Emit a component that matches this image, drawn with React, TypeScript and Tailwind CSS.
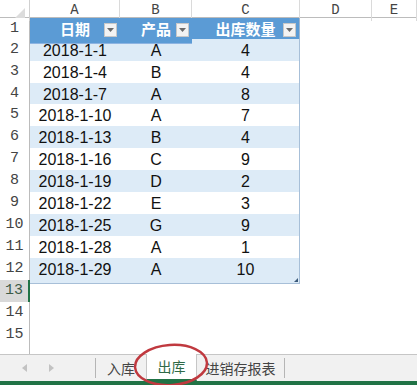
import React from "react";

type Row = { date: string; product: string; qty: string };

const rows: Row[] = [
  { date: "2018-1-1", product: "A", qty: "4" },
  { date: "2018-1-4", product: "B", qty: "4" },
  { date: "2018-1-7", product: "A", qty: "8" },
  { date: "2018-1-10", product: "A", qty: "7" },
  { date: "2018-1-13", product: "B", qty: "4" },
  { date: "2018-1-16", product: "C", qty: "9" },
  { date: "2018-1-19", product: "D", qty: "2" },
  { date: "2018-1-22", product: "E", qty: "3" },
  { date: "2018-1-25", product: "G", qty: "9" },
  { date: "2018-1-28", product: "A", qty: "1" },
  { date: "2018-1-29", product: "A", qty: "10" },
];

const cols = ["A", "B", "C", "D", "E"];

function Dropdown() {
  return (
    <span className="absolute right-[3px] top-1/2 -translate-y-1/2 w-[13px] h-[14px] bg-[#f3f3f3] border border-[#c8c8c8] flex items-center justify-center">
      <svg width="7" height="4" viewBox="0 0 7 4">
        <path d="M0 0h7L3.5 4z" fill="#6b6b6b" />
      </svg>
    </span>
  );
}

function RowNum({ n, selected }: { n?: number; selected?: boolean }) {
  return (
    <div
      className={`flex items-end justify-center pb-[2px] border-b border-[#d6d6d6] text-[15px] font-['Liberation_Mono',monospace] ${
        selected
          ? "bg-[#d9d9d9] text-[#3d5a47] border-r-2 border-r-[#217346]"
          : "bg-white text-[#444] border-r border-r-[#bcbcbc]"
      }`}
    >
      {n}
    </div>
  );
}

export default function App() {
  const heights = ["h-[21px]", "h-[22px]", "h-[22px]", "h-[21px]", "h-[22px]", "h-[22px]", "h-[22px]", "h-[22px]", "h-[22px]", "h-[22px]", "h-[22px]", "h-[22px]"];

  return (
    <div className="w-[417px] h-[385px] bg-white flex flex-col overflow-hidden relative font-['Liberation_Sans','Noto_Sans_CJK_SC',sans-serif]">
      {/* sheet */}
      <div className="h-[354px] overflow-hidden flex flex-col">
        {/* column letters */}
        <div className="grid grid-cols-[30px_90px_72px_108px_72px_1fr] h-[18px] shrink-0 border-b border-[#bcbcbc] bg-white">
          <div className="border-r border-[#d0d0d0] relative">
            <svg className="absolute right-[4px] bottom-[3px]" width="10" height="10" viewBox="0 0 10 10">
              <path d="M10 0V10H0z" fill="#dcdcdc" />
            </svg>
          </div>
          {cols.map((c) => (
            <div
              key={c}
              className="border-r border-[#dadada] flex items-center justify-center text-[14px] text-[#444] font-['Liberation_Mono',monospace]"
            >
              {c}
            </div>
          ))}
        </div>

        {/* header row */}
        <div className={`grid grid-cols-[30px_90px_72px_108px_72px_1fr] ${heights[0]} shrink-0`}>
          <RowNum n={1} />
          <div className="bg-[#5b9bd5] relative flex items-center justify-center text-white font-bold text-[15px] border-b border-[#8db4e2]">
            日期
            <Dropdown />
          </div>
          <div className="bg-[#5b9bd5] relative flex items-center justify-center text-white font-bold text-[15px] border-b border-[#8db4e2]">
            产品
            <Dropdown />
          </div>
          <div className="bg-[#5b9bd5] relative flex items-center justify-center text-white font-bold text-[15px] border-b border-[#8db4e2] border-r border-r-[#9fb6cf]">
            出库数量
            <Dropdown />
          </div>
          <div />
          <div />
        </div>

        {/* data rows */}
        {rows.map((r, i) => {
          const band = i % 2 === 0 ? "bg-[#ddebf7]" : "bg-white";
          const last = i === rows.length - 1;
          return (
            <div
              key={r.date}
              className={`grid grid-cols-[30px_90px_72px_108px_72px_1fr] ${heights[i + 1]} shrink-0`}
            >
              <RowNum n={i + 2} />
              <div className={`${band} flex items-center justify-center text-[16px] text-[#111] border-b border-[#a7bfd8]`}>
                {r.date}
              </div>
              <div className={`${band} flex items-center justify-center text-[16px] text-[#111] border-b border-[#a7bfd8]`}>
                {r.product}
              </div>
              <div className={`${band} relative flex items-center justify-center text-[16px] text-[#111] border-b border-[#a7bfd8] border-r border-r-[#a7bfd8]`}>
                {r.qty}
                {last && (
                  <svg className="absolute right-[1px] bottom-[1px]" width="4" height="4" viewBox="0 0 4 4">
                    <path d="M4 0V4H0z" fill="#3b5a7a" />
                  </svg>
                )}
              </div>
              <div />
              <div />
            </div>
          );
        })}

        {/* empty rows */}
        {[13, 14, 15].map((n) => (
          <div key={n} className="grid grid-cols-[30px_90px_72px_108px_72px_1fr] h-[22px] shrink-0">
            <RowNum n={n} selected={n === 13} />
            <div />
            <div />
            <div />
            <div />
            <div />
          </div>
        ))}
        {/* partially visible row 16 */}
        <div className="grid grid-cols-[30px_90px_72px_108px_72px_1fr] h-[22px] shrink-0">
          <RowNum />
          <div />
          <div />
          <div />
          <div />
          <div />
        </div>
      </div>

      {/* sheet tabs */}
      <div className="h-[27px] shrink-0 bg-[#f1f1f1] border-t border-[#c6c6c6] flex items-stretch text-[14px] text-[#444] font-['Noto_Sans_CJK_SC',sans-serif]">
        <div className="w-[96px] flex items-center pl-[22px] gap-[22px] border-r border-[#b5b5b5] my-[3px]">
          <svg width="5" height="8" viewBox="0 0 5 8">
            <path d="M5 0V8L0 4z" fill="#c2c2c2" />
          </svg>
          <svg width="5" height="8" viewBox="0 0 5 8">
            <path d="M0 0V8L5 4z" fill="#c2c2c2" />
          </svg>
        </div>
        <div className="w-[50px] flex items-center justify-center">入库</div>
        <div className="w-[51px] flex items-center justify-center bg-white border-x border-[#c6c6c6] border-b-2 border-b-[#217346] -mt-px text-[#2f6a47]">
          出库
        </div>
        <div className="w-[88px] flex items-center justify-center border-r border-[#b5b5b5] my-[3px]">
          进销存报表
        </div>
        <div className="flex-1" />
      </div>
      <div className="h-[4px] shrink-0 bg-[#217346]" />

      {/* red circle annotation */}
      <svg className="absolute left-[131px] top-[339px]" width="82" height="50" viewBox="0 0 82 50">
        <ellipse cx="40" cy="26" rx="36" ry="20" fill="none" stroke="#c0393f" strokeWidth="2.5" transform="rotate(-4 40 26)" />
      </svg>
    </div>
  );
}
